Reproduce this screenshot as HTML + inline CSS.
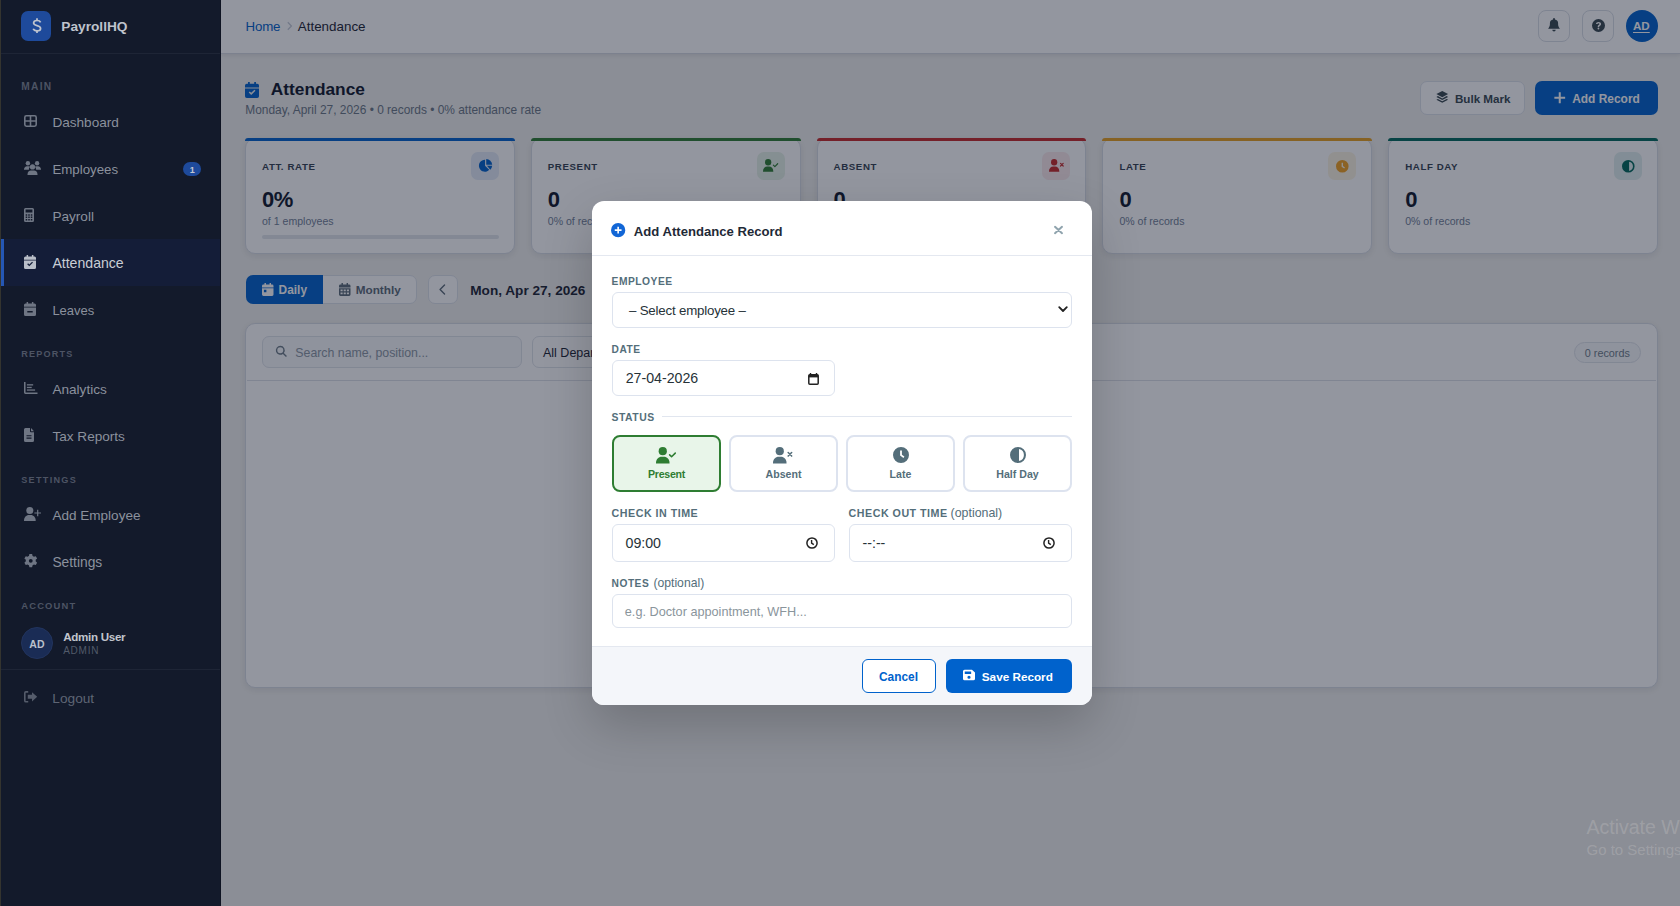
<!DOCTYPE html>
<html><head><meta charset="utf-8">
<style>
*{box-sizing:border-box;margin:0;padding:0}
html,body{width:1680px;height:906px;overflow:hidden}
body{position:relative;font-family:"Liberation Sans",sans-serif;background:#f0f0ee}
.a{position:absolute}
.t{position:absolute;white-space:nowrap;line-height:1}
svg{display:block;overflow:visible}
</style></head><body>
<div class="a" style="left:221px;top:0px;width:1459px;height:54px;background:#fff;border-bottom:1px solid #d5d9e1;box-shadow:0 1px 4px rgba(15,23,42,.1)"></div>
<div class="t" style="left:245.50px;top:20.00px;font-size:13.3px;color:#0062cc;font-weight:normal;letter-spacing:-0.15px;">Home</div>
<svg class="a" style="left:286px;top:21px" width="7" height="10" viewBox="0 0 7 10"><path d="M1.8 1.2l3.6 3.8-3.6 3.8" fill="none" stroke="#c5cbd6" stroke-width="1.3"/></svg>
<div class="t" style="left:297.80px;top:20.00px;font-size:13.4px;color:#1b2332;font-weight:normal;letter-spacing:0px;">Attendance</div>
<div class="a" style="left:1538px;top:10px;width:32px;height:32px;border:1px solid #d9dee6;border-radius:8px;background:#fff"></div>
<div class="a" style="left:1582px;top:10px;width:32px;height:32px;border:1px solid #d9dee6;border-radius:8px;background:#fff"></div>
<svg class="a" style="left:1548px;top:18.2px" width="12" height="13.5" viewBox="0 0 12 14" preserveAspectRatio="none" fill="#37474f"><path d="M6 0a.9.9 0 0 1 .9.9v.6A4 4 0 0 1 10.1 5.4v1.2c0 1.5.5 2.9 1.4 4l.5.6H0l.5-.6c.9-1.1 1.4-2.5 1.4-4V5.4A4 4 0 0 1 5.1 1.5V.9A.9.9 0 0 1 6 0z"/><path d="M4.3 12.2h3.4a1.7 1.7 0 0 1-3.4 0z"/></svg>
<svg class="a" style="left:1591.7px;top:18.6px" width="13" height="13" viewBox="0 0 16 16" preserveAspectRatio="none" fill="#37474f"><path fill-rule="evenodd" d="M8 0a8 8 0 1 1 0 16A8 8 0 0 1 8 0zM8 3.6c-1.7 0-3 1-3.1 2.6h1.9c.1-.6.5-1 1.2-1 .7 0 1.1.4 1.1.9 0 .5-.3.8-.9 1.2-.8.5-1.2 1-1.1 2.1v.4h1.8v-.3c0-.6.2-.8 1-1.3.8-.5 1.3-1.2 1.3-2.2 0-1.4-1.3-2.4-3.2-2.4zM7.9 10.6a1.1 1.1 0 1 0 0 2.2 1.1 1.1 0 0 0 0-2.2z"/></svg>
<div class="a" style="left:1626px;top:10px;width:32px;height:32px;border-radius:50%;background:#0062cc"></div>
<div class="t" style="left:1633.00px;top:20.00px;font-size:11.6px;color:#fff;font-weight:bold;letter-spacing:0px;text-decoration:underline;text-underline-offset:1.5px">AD</div>
<svg class="a" style="left:245px;top:82px" width="14" height="16" viewBox="0 0 12 14" preserveAspectRatio="none" fill="#0062cc"><path d="M2.6 0h1.5v1.6h3.8V0h1.5v1.6h1.1A1.5 1.5 0 0 1 12 3.1v1.7H0V3.1a1.5 1.5 0 0 1 1.5-1.5h1.1z"/><path fill-rule="evenodd" d="M0 5.6h12v6.9A1.5 1.5 0 0 1 10.5 14h-9A1.5 1.5 0 0 1 0 12.5zM3.2 9.2l2.1 2.1 3.7-3.7-.9-.9-2.8 2.8-1.2-1.2z"/></svg>
<div class="t" style="left:270.80px;top:81.00px;font-size:17.3px;color:#0f172a;font-weight:bold;letter-spacing:0px;">Attendance</div>
<div class="t" style="left:245.30px;top:105.00px;font-size:11.93px;color:#6b7785;font-weight:normal;letter-spacing:0px;">Monday, April 27, 2026 &bull; 0 records &bull; 0% attendance rate</div>
<div class="a" style="left:1420px;top:81px;width:105px;height:34px;border:1px solid #dde2ea;border-radius:7px;background:#fff"></div>
<svg class="a" style="left:1435.5px;top:90.5px" width="12.5" height="13" viewBox="0 0 16 16" preserveAspectRatio="none" fill="#37474f"><path d="M8 0l7.5 3.8L8 7.6 .5 3.8z"/><path d="M2.4 6.3L8 9.2l5.6-2.9 1.9 1L8 11.1.5 7.3z"/><path d="M2.4 9.8L8 12.7l5.6-2.9 1.9 1L8 14.6.5 10.8z"/></svg>
<div class="t" style="left:1454.90px;top:93.00px;font-size:11.65px;color:#37474f;font-weight:bold;letter-spacing:0px;">Bulk Mark</div>
<div class="a" style="left:1535px;top:81px;width:123px;height:34px;border-radius:7px;background:#0062cc"></div>
<svg class="a" style="left:1553.5px;top:91.5px" width="11.5" height="11.5" viewBox="0 0 16 16" preserveAspectRatio="none" fill="#fff"><path d="M6.6 .5h2.8v6.1h6.1v2.8H9.4v6.1H6.6V9.4H.5V6.6h6.1z"/></svg>
<div class="t" style="left:1572.20px;top:94.00px;font-size:11.95px;color:#fff;font-weight:bold;letter-spacing:0px;">Add Record</div>
<div class="a" style="left:245.0px;top:138px;width:269.8px;height:116px;background:#fff;border:1px solid #d8dce4;border-radius:10px;overflow:hidden;box-shadow:0 2px 6px rgba(15,23,42,.08)"></div>
<div class="a" style="left:245.0px;top:138px;width:269.8px;height:3px;background:#0062cc;border-radius:10px 10px 0 0"></div>
<div class="t" style="left:262.00px;top:162.00px;font-size:9.7px;color:#334150;font-weight:bold;letter-spacing:0.6px;">ATT. RATE</div>
<div class="a" style="left:470.8px;top:152px;width:28px;height:28px;background:#e3ebf7;border-radius:7px"></div>
<svg class="a" style="left:479.3px;top:158.9px" width="13.6" height="12.8" viewBox="0 0 16 15" preserveAspectRatio="none" fill="#0062cc"><path d="M7.1 .9v6.9l4.9 4.9A7 7 0 1 1 7.1 .9z"/><path d="M8.5 0v6.6h7A7 7 0 0 0 8.5 0z"/><path d="M9.4 8h6.1a7 7 0 0 1-2.2 4.6z"/></svg>
<div class="t" style="left:262.00px;top:189.00px;font-size:22px;color:#0f172a;font-weight:bold;letter-spacing:-0.6px;">0%</div>
<div class="t" style="left:262.00px;top:216.00px;font-size:10.55px;color:#718096;font-weight:normal;letter-spacing:0px;">of 1 employees</div>
<div class="a" style="left:262px;top:235px;width:237px;height:4px;background:#e2e6ec;border-radius:2px"></div>
<div class="a" style="left:530.8px;top:138px;width:269.8px;height:116px;background:#fff;border:1px solid #d8dce4;border-radius:10px;overflow:hidden;box-shadow:0 2px 6px rgba(15,23,42,.08)"></div>
<div class="a" style="left:530.8px;top:138px;width:269.8px;height:3px;background:#2e7d32;border-radius:10px 10px 0 0"></div>
<div class="t" style="left:547.80px;top:162.00px;font-size:9.7px;color:#334150;font-weight:bold;letter-spacing:0.6px;">PRESENT</div>
<div class="a" style="left:756.6px;top:152px;width:28px;height:28px;background:#e6f2e7;border-radius:7px"></div>
<svg class="a" style="left:762.8px;top:159.4px" width="15.6" height="12.8" viewBox="0 0 20 16" preserveAspectRatio="none" fill="#2e7d32"><circle cx="6.6" cy="4" r="4"/><path d="M0 16v-.7C0 11.9 2.5 9.4 5.5 9.4h2.2c3 0 5.5 2.5 5.5 5.9v.7z"/><path d="M13.3 7.6l1.9 1.9 3.6-3.6" fill="none" stroke="#2e7d32" stroke-width="1.5" stroke-linecap="round" stroke-linejoin="round"/></svg>
<div class="t" style="left:547.80px;top:189.00px;font-size:22px;color:#0f172a;font-weight:bold;letter-spacing:-0.6px;">0</div>
<div class="t" style="left:547.80px;top:216.00px;font-size:10.55px;color:#718096;font-weight:normal;letter-spacing:0px;">0% of records</div>
<div class="a" style="left:816.6px;top:138px;width:269.8px;height:116px;background:#fff;border:1px solid #d8dce4;border-radius:10px;overflow:hidden;box-shadow:0 2px 6px rgba(15,23,42,.08)"></div>
<div class="a" style="left:816.6px;top:138px;width:269.8px;height:3px;background:#c62828;border-radius:10px 10px 0 0"></div>
<div class="t" style="left:833.60px;top:162.00px;font-size:9.7px;color:#334150;font-weight:bold;letter-spacing:0.6px;">ABSENT</div>
<div class="a" style="left:1042.4px;top:152px;width:28px;height:28px;background:#fbe9ec;border-radius:7px"></div>
<svg class="a" style="left:1048.6px;top:159.4px" width="15.6" height="12.8" viewBox="0 0 20 16" preserveAspectRatio="none" fill="#c62828"><circle cx="6.6" cy="4" r="4"/><path d="M0 16v-.7C0 11.9 2.5 9.4 5.5 9.4h2.2c3 0 5.5 2.5 5.5 5.9v.7z"/><path d="M14.8 5.4l3.4 3.4M18.2 5.4l-3.4 3.4" fill="none" stroke="#c62828" stroke-width="1.5" stroke-linecap="round"/></svg>
<div class="t" style="left:833.60px;top:189.00px;font-size:22px;color:#0f172a;font-weight:bold;letter-spacing:-0.6px;">0</div>
<div class="t" style="left:833.60px;top:216.00px;font-size:10.55px;color:#718096;font-weight:normal;letter-spacing:0px;">0% of records</div>
<div class="a" style="left:1102.4px;top:138px;width:269.8px;height:116px;background:#fff;border:1px solid #d8dce4;border-radius:10px;overflow:hidden;box-shadow:0 2px 6px rgba(15,23,42,.08)"></div>
<div class="a" style="left:1102.4px;top:138px;width:269.8px;height:3px;background:#e8a020;border-radius:10px 10px 0 0"></div>
<div class="t" style="left:1119.40px;top:162.00px;font-size:9.7px;color:#334150;font-weight:bold;letter-spacing:0.6px;">LATE</div>
<div class="a" style="left:1328.2px;top:152px;width:28px;height:28px;background:#fcf4e2;border-radius:7px"></div>
<svg class="a" style="left:1335.9px;top:159.6px" width="12.6" height="12.6" viewBox="0 0 16 16" preserveAspectRatio="none" fill="#f0a020"><path fill-rule="evenodd" d="M8 0a8 8 0 1 1 0 16A8 8 0 0 1 8 0zM7.1 3.5v5l3.3 2.4 1-1.3-2.5-1.9V3.5z"/></svg>
<div class="t" style="left:1119.40px;top:189.00px;font-size:22px;color:#0f172a;font-weight:bold;letter-spacing:-0.6px;">0</div>
<div class="t" style="left:1119.40px;top:216.00px;font-size:10.55px;color:#718096;font-weight:normal;letter-spacing:0px;">0% of records</div>
<div class="a" style="left:1388.2px;top:138px;width:269.8px;height:116px;background:#fff;border:1px solid #d8dce4;border-radius:10px;overflow:hidden;box-shadow:0 2px 6px rgba(15,23,42,.08)"></div>
<div class="a" style="left:1388.2px;top:138px;width:269.8px;height:3px;background:#00695c;border-radius:10px 10px 0 0"></div>
<div class="t" style="left:1405.20px;top:162.00px;font-size:9.7px;color:#334150;font-weight:bold;letter-spacing:0.6px;">HALF DAY</div>
<div class="a" style="left:1614.0px;top:152px;width:28px;height:28px;background:#e0efee;border-radius:7px"></div>
<svg class="a" style="left:1621.7px;top:159.6px" width="12.6" height="12.6" viewBox="0 0 16 16" preserveAspectRatio="none" fill="#00695c"><path fill-rule="evenodd" d="M8 0a8 8 0 1 1 0 16A8 8 0 0 1 8 0zM9 2.1v11.8A6 6 0 0 0 9 2.1z"/></svg>
<div class="t" style="left:1405.20px;top:189.00px;font-size:22px;color:#0f172a;font-weight:bold;letter-spacing:-0.6px;">0</div>
<div class="t" style="left:1405.20px;top:216.00px;font-size:10.55px;color:#718096;font-weight:normal;letter-spacing:0px;">0% of records</div>
<div class="a" style="left:246px;top:275px;width:171px;height:29px;border:1px solid #dde2ea;border-radius:7px;background:#fff;overflow:hidden"></div>
<div class="a" style="left:246px;top:275px;width:77px;height:29px;background:#0062cc;border-radius:7px 0 0 7px"></div>
<svg class="a" style="left:262px;top:283px" width="11.5" height="13" viewBox="0 0 12 14" preserveAspectRatio="none" fill="#fff"><path d="M2.6 0h1.5v1.6h3.8V0h1.5v1.6h1.1A1.5 1.5 0 0 1 12 3.1v1.7H0V3.1a1.5 1.5 0 0 1 1.5-1.5h1.1z"/><path fill-rule="evenodd" d="M0 5.6h12v6.9A1.5 1.5 0 0 1 10.5 14h-9A1.5 1.5 0 0 1 0 12.5zM2 7.4v2.6h2.6V7.4z"/></svg>
<div class="t" style="left:278.60px;top:285.00px;font-size:11.9px;color:#fff;font-weight:bold;letter-spacing:0px;">Daily</div>
<svg class="a" style="left:338.5px;top:283px" width="11.5" height="13" viewBox="0 0 12 14" preserveAspectRatio="none" fill="#5b6b78"><path d="M2.6 0h1.5v1.6h3.8V0h1.5v1.6h1.1A1.5 1.5 0 0 1 12 3.1v1.7H0V3.1a1.5 1.5 0 0 1 1.5-1.5h1.1z"/><path fill-rule="evenodd" d="M0 5.6h12v6.9A1.5 1.5 0 0 1 10.5 14h-9A1.5 1.5 0 0 1 0 12.5zM1.6 7v1.8h2.2V7zM4.9 7v1.8h2.2V7zM8.2 7v1.8h2.2V7zM1.6 10.2V12h2.2v-1.8zM4.9 10.2V12h2.2v-1.8zM8.2 10.2V12h2.2v-1.8z"/></svg>
<div class="t" style="left:355.70px;top:284.00px;font-size:11.75px;color:#5b6b78;font-weight:bold;letter-spacing:0px;">Monthly</div>
<div class="a" style="left:428px;top:275px;width:30px;height:29px;border:1px solid #dde2ea;border-radius:7px;background:#fff"></div>
<svg class="a" style="left:436px;top:283px" width="13" height="13" viewBox="0 0 16 16" preserveAspectRatio="none" fill="#5b6b78"><path d="M10.5 2.5L5 8l5.5 5.5" fill="none" stroke="#5b6b78" stroke-width="1.7" stroke-linecap="round" stroke-linejoin="round"/></svg>
<div class="t" style="left:470.30px;top:284.00px;font-size:13.6px;color:#1b2332;font-weight:bold;letter-spacing:0px;">Mon, Apr 27, 2026</div>
<div class="a" style="left:245px;top:323px;width:1413px;height:365px;background:#fff;border:1px solid #d8dce4;border-radius:10px;box-shadow:0 2px 6px rgba(15,23,42,.08)"></div>
<div class="a" style="left:247px;top:380px;width:1409px;height:1px;background:#dde1e8"></div>
<div class="a" style="left:262px;top:336px;width:260px;height:32px;border:1px solid #dfe3ea;border-radius:7px;background:#f7f9fb"></div>
<svg class="a" style="left:274.5px;top:344.5px" width="13" height="13" viewBox="0 0 16 16" preserveAspectRatio="none" fill="#6e7c88"><path d="M6.5 1a5.5 5.5 0 0 1 4.4 8.8l3.8 3.8-1.2 1.2-3.8-3.8A5.5 5.5 0 1 1 6.5 1zm0 1.8a3.7 3.7 0 1 0 0 7.4 3.7 3.7 0 0 0 0-7.4z"/></svg>
<div class="t" style="left:295.30px;top:347.00px;font-size:12.33px;color:#8a96a3;font-weight:normal;letter-spacing:0px;">Search name, position...</div>
<div class="a" style="left:532px;top:336px;width:140px;height:32px;border:1px solid #dfe3ea;border-radius:7px;background:#fff"></div>
<div class="t" style="left:543.00px;top:347.00px;font-size:12.5px;color:#1b2332;font-weight:normal;letter-spacing:0px;">All Departments</div>
<div class="a" style="left:1574px;top:342px;width:67px;height:21px;border:1px solid #dfe3ea;border-radius:11px;background:#f7f9fb"></div>
<div class="t" style="left:1584.80px;top:348.00px;font-size:10.8px;color:#6e7c88;font-weight:normal;letter-spacing:0px;">0 records</div>
<div class="a" style="left:221px;top:0px;width:1459px;height:906px;background:rgba(15,23,42,0.45)"></div>
<div class="t" style="left:1586.50px;top:818.00px;font-size:19.5px;color:rgba(255,250,240,.18);font-weight:normal;letter-spacing:0px;">Activate Windows</div>
<div class="t" style="left:1586.50px;top:842.00px;font-size:15px;color:rgba(255,250,240,.18);font-weight:normal;letter-spacing:0px;">Go to Settings to activate Windows.</div>
<div class="a" style="left:0px;top:0px;width:221px;height:906px;background:#131a2b"></div>
<div class="a" style="left:0px;top:0px;width:1px;height:906px;background:#34342f"></div>
<div class="a" style="left:220px;top:0px;width:1px;height:906px;background:#0e1322"></div>
<div class="a" style="left:1px;top:53px;width:219px;height:1px;background:#1e2536"></div>
<div class="a" style="left:21px;top:11px;width:30px;height:30px;background:#1e4a9b;border-radius:7px"></div>
<svg class="a" style="left:31.5px;top:18px" width="10" height="15" viewBox="0 0 10 15"><path d="M8.6 4.4C8.1 3.1 6.9 2.5 5 2.5 3 2.5 1.6 3.5 1.6 5c0 1.6 1.4 2.1 3.4 2.6 2 .5 3.6 1.1 3.6 2.8 0 1.6-1.5 2.4-3.6 2.4-2 0-3.3-.7-3.8-2" fill="none" stroke="#bfc4ce" stroke-width="1.7"/><path d="M5 .2v2.4M5 12.6v2.3" stroke="#bfc4ce" stroke-width="1.7"/></svg>
<div class="t" style="left:61.30px;top:20.00px;font-size:13.7px;color:#bfc3cc;font-weight:bold;letter-spacing:0px;">PayrollHQ</div>
<div class="t" style="left:21.20px;top:82.00px;font-size:10.2px;color:#4d5464;font-weight:bold;letter-spacing:1.3px;">MAIN</div>
<div class="t" style="left:21.20px;top:350.00px;font-size:9.1px;color:#4d5464;font-weight:bold;letter-spacing:1.2px;">REPORTS</div>
<div class="t" style="left:21.20px;top:476.00px;font-size:9.1px;color:#4d5464;font-weight:bold;letter-spacing:1.3px;">SETTINGS</div>
<div class="t" style="left:21.20px;top:601.00px;font-size:9.4px;color:#4d5464;font-weight:bold;letter-spacing:1.2px;">ACCOUNT</div>
<div class="a" style="left:1px;top:239px;width:219px;height:47px;background:#141d38"></div>
<div class="a" style="left:1px;top:239px;width:3px;height:47px;background:#2557b5"></div>
<div class="t" style="left:52.40px;top:116.00px;font-size:13.6px;color:#8b919d;font-weight:normal;letter-spacing:0px;">Dashboard</div>
<svg class="a" style="left:24px;top:115px" width="13" height="12" viewBox="0 0 13 12" preserveAspectRatio="none" fill="#6f7684"><rect x=".8" y=".8" width="11.4" height="10.4" rx="1.6" fill="none" stroke="#6f7684" stroke-width="1.6"/><path d="M6.5 1v10M1 6h11" stroke="#6f7684" stroke-width="1.6"/></svg>
<div class="t" style="left:52.40px;top:163.00px;font-size:13.3px;color:#8b919d;font-weight:normal;letter-spacing:0px;">Employees</div>
<svg class="a" style="left:23.8px;top:161px" width="17" height="14" viewBox="0 0 17 14" preserveAspectRatio="none" fill="#6f7684"><circle cx="3.9" cy="2.3" r="2.2"/><circle cx="13.1" cy="2.3" r="2.2"/><path d="M0 8.6C0 6.6 1.3 5.2 3 5.2h1.8c.6 0 1.1.2 1.5.5-.9.7-1.4 1.8-1.4 3H0z"/><path d="M17 8.6c0-2-1.3-3.4-3-3.4h-1.8c-.6 0-1.1.2-1.5.5.9.7 1.4 1.8 1.4 3H17z"/><circle cx="8.5" cy="5.9" r="2.6"/><path d="M3.5 14v-.8C3.5 11 5 9.4 7 9.4h3c2 0 3.5 1.6 3.5 3.8v.8z"/></svg>
<div class="t" style="left:52.40px;top:210.00px;font-size:13.6px;color:#8b919d;font-weight:normal;letter-spacing:0px;">Payroll</div>
<svg class="a" style="left:24px;top:208px" width="10" height="14" viewBox="0 0 10 14" preserveAspectRatio="none" fill="#6f7684"><path fill-rule="evenodd" d="M1.5 0h7A1.5 1.5 0 0 1 10 1.5v11A1.5 1.5 0 0 1 8.5 14h-7A1.5 1.5 0 0 1 0 12.5v-11A1.5 1.5 0 0 1 1.5 0zM1.6 1.6v3h6.8v-3zM1.7 6.2v1.5h1.5V6.2zM4.25 6.2v1.5h1.5V6.2zM6.8 6.2v1.5h1.5V6.2zM1.7 8.6v1.5h1.5V8.6zM4.25 8.6v1.5h1.5V8.6zM6.8 8.6v1.5h1.5V8.6zM1.7 11v1.5h1.5V11zM4.25 11v1.5h1.5V11zM6.8 11v1.5h1.5V11z"/></svg>
<div class="t" style="left:52.40px;top:256.00px;font-size:14.1px;color:#c9cdd5;font-weight:normal;letter-spacing:0px;">Attendance</div>
<svg class="a" style="left:24px;top:255px" width="12" height="14" viewBox="0 0 12 14" preserveAspectRatio="none" fill="#b9bec8"><path d="M2.6 0h1.5v1.6h3.8V0h1.5v1.6h1.1A1.5 1.5 0 0 1 12 3.1v1.7H0V3.1a1.5 1.5 0 0 1 1.5-1.5h1.1z"/><path fill-rule="evenodd" d="M0 5.6h12v6.9A1.5 1.5 0 0 1 10.5 14h-9A1.5 1.5 0 0 1 0 12.5zM3.2 9.2l2.1 2.1 3.7-3.7-.9-.9-2.8 2.8-1.2-1.2z"/></svg>
<div class="t" style="left:52.40px;top:304.00px;font-size:13.0px;color:#8b919d;font-weight:normal;letter-spacing:0px;">Leaves</div>
<svg class="a" style="left:24.4px;top:302px" width="12" height="14" viewBox="0 0 12 14" preserveAspectRatio="none" fill="#6f7684"><path d="M2.6 0h1.5v1.6h3.8V0h1.5v1.6h1.1A1.5 1.5 0 0 1 12 3.1v1.7H0V3.1a1.5 1.5 0 0 1 1.5-1.5h1.1z"/><path fill-rule="evenodd" d="M0 5.6h12v6.9A1.5 1.5 0 0 1 10.5 14h-9A1.5 1.5 0 0 1 0 12.5zM3.3 9.1v1.3h5.4V9.1z"/></svg>
<div class="t" style="left:52.40px;top:383.00px;font-size:13.6px;color:#8b919d;font-weight:normal;letter-spacing:0px;">Analytics</div>
<svg class="a" style="left:24px;top:382px" width="13.5" height="12" viewBox="0 0 14 12" preserveAspectRatio="none" fill="#6f7684"><path d="M0 0h1.6v10.4H14V12H1.4A1.4 1.4 0 0 1 0 10.6z"/><rect x="3" y="2.2" width="6.5" height="1.3"/><rect x="3" y="4.8" width="5" height="1.3"/><rect x="3" y="7.4" width="8.5" height="1.3"/></svg>
<div class="t" style="left:52.40px;top:430.00px;font-size:13.6px;color:#8b919d;font-weight:normal;letter-spacing:0px;">Tax Reports</div>
<svg class="a" style="left:24px;top:428px" width="10" height="14" viewBox="0 0 10 14" preserveAspectRatio="none" fill="#6f7684"><path fill-rule="evenodd" d="M1.5 0H6v3.2A1 1 0 0 0 7 4.2h3v8.3A1.5 1.5 0 0 1 8.5 14h-7A1.5 1.5 0 0 1 0 12.5v-11A1.5 1.5 0 0 1 1.5 0zM2.5 7.2v1.1h5V7.2zM2.5 9.6v1.1h5V9.6z"/><path d="M7 0l3 3.2H7z"/></svg>
<div class="t" style="left:52.40px;top:509.00px;font-size:13.55px;color:#8b919d;font-weight:normal;letter-spacing:0px;">Add Employee</div>
<svg class="a" style="left:23.8px;top:507.3px" width="17" height="14" viewBox="0 0 17 14" preserveAspectRatio="none" fill="#6f7684"><circle cx="5.8" cy="3.5" r="3.5"/><path d="M0 14v-.6C0 10.3 2.2 7.9 4.9 7.9h1.9c2.7 0 4.9 2.4 4.9 5.5v.6z"/><path d="M13.7 2.7v6.6M10.4 6h6.6" stroke="#6f7684" stroke-width="1.2"/></svg>
<div class="t" style="left:52.40px;top:556.00px;font-size:13.8px;color:#8b919d;font-weight:normal;letter-spacing:0px;">Settings</div>
<svg class="a" style="left:23.8px;top:554.3px" width="13.5" height="13.7" viewBox="0 0 14 14" preserveAspectRatio="none" fill="#6f7684"><path fill-rule="evenodd" d="M5.6 0h2.8l.5 2c.5.2.9.5 1.3.8l2-.6 1.4 2.4-1.5 1.4c.1.5.1 1 0 1.5l1.5 1.4-1.4 2.4-2-.6c-.4.3-.8.6-1.3.8l-.5 2.1H5.6l-.5-2.1c-.5-.2-.9-.5-1.3-.8l-2 .6L.4 8.9l1.5-1.4c-.1-.5-.1-1 0-1.5L.4 4.6l1.4-2.4 2 .6c.4-.3.8-.6 1.3-.8zM7 5A2 2 0 1 0 7 9 2 2 0 0 0 7 5z"/></svg>
<div class="a" style="left:183px;top:162px;width:18px;height:14px;background:#1e4a9b;border-radius:7px"></div>
<div class="t" style="left:189.80px;top:166.00px;font-size:9px;color:#c3c8d2;font-weight:bold;letter-spacing:0px;">1</div>
<div class="a" style="left:21px;top:627px;width:32px;height:32px;background:#1a2c55;border-radius:50%;border:1px solid #22345e"></div>
<div class="t" style="left:29.30px;top:639.00px;font-size:10.5px;color:#b9c0cc;font-weight:bold;letter-spacing:0px;">AD</div>
<div class="t" style="left:63.20px;top:631.00px;font-size:11.6px;color:#c1c5cd;font-weight:bold;letter-spacing:-0.3px;">Admin User</div>
<div class="t" style="left:63.20px;top:646.00px;font-size:10px;color:#525a6a;font-weight:normal;letter-spacing:0.75px;">ADMIN</div>
<div class="a" style="left:1px;top:669px;width:219px;height:1px;background:#1e2536"></div>
<svg class="a" style="left:23.8px;top:691px" width="13.2" height="11.6" viewBox="0 0 14 12" preserveAspectRatio="none" fill="#555c6b"><path d="M4.5 0H2A2 2 0 0 0 0 2v8a2 2 0 0 0 2 2h2.5v-1.7H2a.3.3 0 0 1-.3-.3V2a.3.3 0 0 1 .3-.3h2.5z"/><path d="M8.5 1.2L14 6l-5.5 4.8V8H4V4h4.5z"/></svg>
<div class="t" style="left:52.30px;top:692.00px;font-size:13.7px;color:#5e6574;font-weight:normal;letter-spacing:0px;">Logout</div>
<div class="a" style="left:592px;top:201px;width:500px;height:504px;background:#fff;border-radius:12px;box-shadow:0 20px 50px rgba(0,0,0,.2);overflow:hidden"></div>
<div class="a" style="left:592px;top:255px;width:500px;height:1px;background:#e4e8f0"></div>
<svg class="a" style="left:611.3px;top:223px" width="14.3" height="14.3" viewBox="0 0 16 16" preserveAspectRatio="none" fill="#1266d6"><path fill-rule="evenodd" d="M8 0a8 8 0 1 1 0 16A8 8 0 0 1 8 0zM7.1 4.2v2.9H4.2v1.8h2.9v2.9h1.8V8.9h2.9V7.1H8.9V4.2z"/></svg>
<div class="t" style="left:633.80px;top:225.00px;font-size:13.12px;color:#1f2a37;font-weight:bold;letter-spacing:0px;">Add Attendance Record</div>
<svg class="a" style="left:1054px;top:226px" width="9" height="8" viewBox="0 0 9 8"><path d="M1 .8l7 6.4M8 .8L1 7.2" stroke="#90a4ae" stroke-width="2" stroke-linecap="round"/></svg>
<div class="t" style="left:611.60px;top:277.00px;font-size:10.26px;color:#546e7a;font-weight:bold;letter-spacing:0.5px;">EMPLOYEE</div>
<div class="a" style="left:612px;top:292px;width:460px;height:36px;border:1.5px solid #dde3ee;border-radius:6px;background:#fff"></div>
<div class="t" style="left:629.00px;top:304.00px;font-size:13.3px;color:#263238;font-weight:normal;letter-spacing:-0.2px;">&ndash; Select employee &ndash;</div>
<svg class="a" style="left:1058px;top:306px" width="10" height="7" viewBox="0 0 10 7"><path d="M1.2 1.2L5 5l3.8-3.8" fill="none" stroke="#222" stroke-width="1.8" stroke-linecap="round" stroke-linejoin="round"/></svg>
<div class="t" style="left:611.60px;top:345.00px;font-size:10.2px;color:#546e7a;font-weight:bold;letter-spacing:0.5px;">DATE</div>
<div class="a" style="left:612px;top:360px;width:223px;height:36px;border:1.5px solid #dde3ee;border-radius:6px;background:#fff"></div>
<div class="t" style="left:625.70px;top:371.00px;font-size:14.2px;color:#263238;font-weight:normal;letter-spacing:0px;">27-04-2026</div>
<svg class="a" style="left:808px;top:372.5px" width="11" height="12" viewBox="0 0 11 12"><path d="M2.5 0v1.5M8.5 0v1.5" stroke="#222" stroke-width="1.4"/><rect x=".8" y="1.8" width="9.4" height="9.4" rx="1" fill="none" stroke="#222" stroke-width="1.5"/><rect x=".8" y="1.8" width="9.4" height="2.6" fill="#222"/></svg>
<div class="t" style="left:611.60px;top:413.00px;font-size:10.4px;color:#546e7a;font-weight:bold;letter-spacing:0.5px;">STATUS</div>
<div class="a" style="left:662px;top:416px;width:410px;height:1px;background:#e1e6ef"></div>
<div class="a" style="left:612px;top:435px;width:109px;height:57px;border:2px solid #2e7d32;border-radius:8px;background:#e8f5e9"></div>
<svg class="a" style="left:656.0px;top:447px" width="20.5" height="16.5" viewBox="0 0 20 16" preserveAspectRatio="none" fill="#2e7d32"><circle cx="6.6" cy="4" r="4"/><path d="M0 16v-.7C0 11.9 2.5 9.4 5.5 9.4h2.2c3 0 5.5 2.5 5.5 5.9v.7z"/><path d="M13.3 7.6l1.9 1.9 3.6-3.6" fill="none" stroke="#2e7d32" stroke-width="1.5" stroke-linecap="round" stroke-linejoin="round"/></svg>
<div class="t" style="left:612px;width:109px;text-align:center;top:469.29px;font-size:10.6px;color:#2e7d32;font-weight:bold;letter-spacing:-0.25px">Present</div>
<div class="a" style="left:729px;top:435px;width:109px;height:57px;border:2px solid #dde3ef;border-radius:8px;background:#fff"></div>
<svg class="a" style="left:773.0px;top:447px" width="20.5" height="16.5" viewBox="0 0 20 16" preserveAspectRatio="none" fill="#546e7a"><circle cx="6.6" cy="4" r="4"/><path d="M0 16v-.7C0 11.9 2.5 9.4 5.5 9.4h2.2c3 0 5.5 2.5 5.5 5.9v.7z"/><path d="M14.8 5.4l3.4 3.4M18.2 5.4l-3.4 3.4" fill="none" stroke="#546e7a" stroke-width="1.5" stroke-linecap="round"/></svg>
<div class="t" style="left:729px;width:109px;text-align:center;top:469.29px;font-size:10.6px;color:#546e7a;font-weight:bold;letter-spacing:0px">Absent</div>
<div class="a" style="left:846px;top:435px;width:109px;height:57px;border:2px solid #dde3ef;border-radius:8px;background:#fff"></div>
<svg class="a" style="left:892.5px;top:447px" width="16" height="16" viewBox="0 0 16 16" preserveAspectRatio="none" fill="#546e7a"><path fill-rule="evenodd" d="M8 0a8 8 0 1 1 0 16A8 8 0 0 1 8 0zM7.1 3.5v5l3.3 2.4 1-1.3-2.5-1.9V3.5z"/></svg>
<div class="t" style="left:846px;width:109px;text-align:center;top:469.29px;font-size:10.6px;color:#546e7a;font-weight:bold;letter-spacing:0px">Late</div>
<div class="a" style="left:963px;top:435px;width:109px;height:57px;border:2px solid #dde3ef;border-radius:8px;background:#fff"></div>
<svg class="a" style="left:1009.5px;top:447px" width="16" height="16" viewBox="0 0 16 16" preserveAspectRatio="none" fill="#546e7a"><path fill-rule="evenodd" d="M8 0a8 8 0 1 1 0 16A8 8 0 0 1 8 0zM9 2.1v11.8A6 6 0 0 0 9 2.1z"/></svg>
<div class="t" style="left:963px;width:109px;text-align:center;top:469.29px;font-size:10.6px;color:#546e7a;font-weight:bold;letter-spacing:0px">Half Day</div>
<div class="t" style="left:611.60px;top:508.00px;font-size:10.69px;color:#546e7a;font-weight:bold;letter-spacing:0.5px;">CHECK IN TIME</div>
<div class="t" style="left:848.60px;top:508.00px;font-size:10.69px;color:#546e7a;font-weight:bold;letter-spacing:0.5px;">CHECK OUT TIME</div>
<div class="t" style="left:950.60px;top:507.00px;font-size:12.4px;color:#546e7a;font-weight:normal;letter-spacing:0px;">(optional)</div>
<div class="a" style="left:612px;top:524px;width:223px;height:38px;border:1.5px solid #dde3ee;border-radius:6px;background:#fff"></div>
<div class="a" style="left:849px;top:524px;width:223px;height:38px;border:1.5px solid #dde3ee;border-radius:6px;background:#fff"></div>
<div class="t" style="left:625.50px;top:536.00px;font-size:14.2px;color:#263238;font-weight:normal;letter-spacing:0px;">09:00</div>
<div class="t" style="left:862.50px;top:536.00px;font-size:14.2px;color:#263238;font-weight:normal;letter-spacing:0px;">--:--</div>
<svg class="a" style="left:806px;top:537px" width="12" height="12" viewBox="0 0 12 12"><circle cx="6" cy="6" r="5.1" fill="none" stroke="#222" stroke-width="1.5"/><path d="M5.6 3v3.2l2.2 1.5" fill="none" stroke="#222" stroke-width="1.4"/></svg>
<svg class="a" style="left:1043px;top:537px" width="12" height="12" viewBox="0 0 12 12"><circle cx="6" cy="6" r="5.1" fill="none" stroke="#222" stroke-width="1.5"/><path d="M5.6 3v3.2l2.2 1.5" fill="none" stroke="#222" stroke-width="1.4"/></svg>
<div class="t" style="left:611.60px;top:579.00px;font-size:10.2px;color:#546e7a;font-weight:bold;letter-spacing:0.5px;">NOTES</div>
<div class="t" style="left:653.40px;top:577.00px;font-size:12.2px;color:#546e7a;font-weight:normal;letter-spacing:0px;">(optional)</div>
<div class="a" style="left:612px;top:594px;width:460px;height:34px;border:1.5px solid #dde3ee;border-radius:6px;background:#fff"></div>
<div class="t" style="left:624.80px;top:606.00px;font-size:12.69px;color:#8a959c;font-weight:normal;letter-spacing:0px;">e.g. Doctor appointment, WFH...</div>
<div class="a" style="left:592px;top:646px;width:500px;height:59px;background:#f4f6fa;border-top:1px solid #e4e8f0;border-radius:0 0 12px 12px"></div>
<div class="a" style="left:862px;top:659px;width:74px;height:34px;border:1.2px solid #0062cc;border-radius:6px;background:#fff"></div>
<div class="t" style="left:879.00px;top:672.00px;font-size:11.9px;color:#0062cc;font-weight:bold;letter-spacing:0px;">Cancel</div>
<div class="a" style="left:946px;top:659px;width:126px;height:34px;background:#0062cc;border-radius:6px"></div>
<svg class="a" style="left:963.3px;top:669px" width="12" height="12" viewBox="0 0 15 16" preserveAspectRatio="none" fill="#fff"><path fill-rule="evenodd" d="M2 1h9.2L15 4.8V13a2 2 0 0 1-2 2H2a2 2 0 0 1-2-2V3a2 2 0 0 1 2-2zM2.2 3.2v3.3h8V3.2zM7.5 9a2 2 0 1 0 0 4 2 2 0 0 0 0-4z"/></svg>
<div class="t" style="left:981.80px;top:671.00px;font-size:11.72px;color:#fff;font-weight:bold;letter-spacing:0px;">Save Record</div>
</body></html>
